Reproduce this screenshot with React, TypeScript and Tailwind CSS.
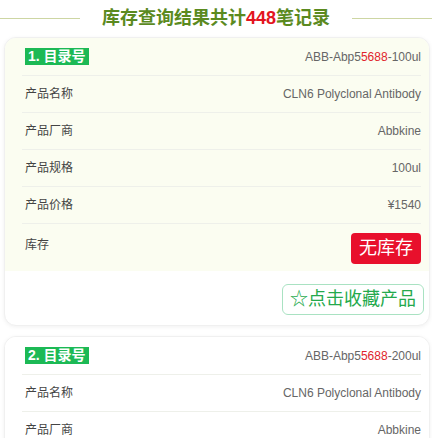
const font = { fontFamily: '"Liberation Sans", "Noto Sans CJK SC", sans-serif' };

type Item = {
  no: number;
  prefix: string;
  hot: string;
  suffix: string;
  name: string;
  brand: string;
  spec: string;
  price: string;
};

const items: Item[] = [
  { no: 1, prefix: 'ABB-Abp5', hot: '5688', suffix: '-100ul', name: 'CLN6 Polyclonal Antibody', brand: 'Abbkine', spec: '100ul', price: '¥1540' },
  { no: 2, prefix: 'ABB-Abp5', hot: '5688', suffix: '-200ul', name: 'CLN6 Polyclonal Antibody', brand: 'Abbkine', spec: '200ul', price: '¥2580' },
];

function Row({ label, children }: { label: string; children: React.ReactNode }) {
  return (
    <div className="flex h-[37px] items-center justify-between border-b border-[#eef0ea] pl-[3px]">
      <span className="text-[12px] text-[#444]">{label}</span>
      <span className="text-[12px] text-[#666]">{children}</span>
    </div>
  );
}

function ResultCard({ item, tinted }: { item: Item; tinted: boolean }) {
  return (
    <div className="mb-[10px] ml-[4px] mr-[2px] overflow-hidden rounded-[12px] border border-[#f0f0f0] bg-white shadow-[0_1px_4px_rgba(0,0,0,0.06)]">
      <div className={tinted ? 'bg-[#fbfdf1] pl-[17px] pr-[8px]' : 'bg-white pl-[17px] pr-[8px]'}>
        <div className="flex h-[38px] items-center justify-between border-b border-[#eef0ea] pl-[3px]">
          <span className="bg-[#1cb955] px-[3px] text-[14px] font-bold leading-[17px] text-white">{item.no}. 目录号</span>
          <span className="text-[12px] text-[#666]">
            {item.prefix}
            <span className="text-[#e0242c]">{item.hot}</span>
            {item.suffix}
          </span>
        </div>
        <Row label="产品名称">{item.name}</Row>
        <Row label="产品厂商">{item.brand}</Row>
        <Row label="产品规格">{item.spec}</Row>
        <Row label="产品价格">{item.price}</Row>
        <div className="flex h-[47px] items-start justify-between pl-[3px] pt-[9px]">
          <span className="mt-[3px] text-[12px] text-[#444]">库存</span>
          <span className="rounded-[4px] bg-[#e8102c] px-[8px] text-[18px] leading-[31px] text-white">无库存</span>
        </div>
      </div>
      <div className="flex justify-end px-[5px] pb-[10px] pt-[13px]">
        <button className="rounded-[6px] border border-[#a9e2c2] bg-white px-[7px] text-[18px] leading-[29px] text-[#24a94c]">
          ☆点击收藏产品
        </button>
      </div>
    </div>
  );
}

export default function App() {
  return (
    <div className="h-[438px] w-[432px] overflow-hidden bg-white" style={font}>
      <div className="flex h-[37px] items-center gap-[22px]">
        <div className="h-px flex-1 bg-[#cdd6a3]" />
        <h1 className="text-[18px] font-bold text-[#5b8a1f]">
          库存查询结果共计<span className="text-[#e3141e]">448</span>笔记录
        </h1>
        <div className="h-px flex-1 bg-[#cdd6a3]" />
      </div>
      {items.map((item, i) => (
        <ResultCard key={item.no} item={item} tinted={i === 0} />
      ))}
    </div>
  );
}
